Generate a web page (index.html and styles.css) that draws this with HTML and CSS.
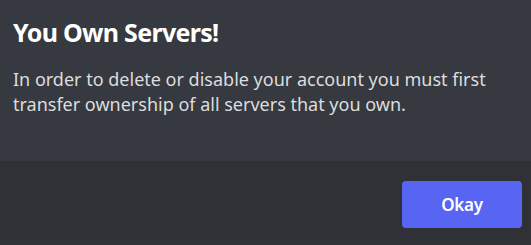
FILE: index.html
```html
<!DOCTYPE html>
<html>
<head>
<meta charset="utf-8">
<link rel="stylesheet" href="styles.css">
</head>
<body>
<div class="modal">
  <div class="content">
    <h2 class="title">You Own Servers!</h2>
    <p class="text">In order to delete or disable your account you must first transfer ownership of all servers that you own.</p>
  </div>
  <div class="footer">
    <button class="btn">Okay</button>
  </div>
</div>
</body>
</html>
```
FILE: styles.css
```css
html, body {
  margin: 0;
  padding: 0;
  width: 531px;
  height: 245px;
  overflow: hidden;
  background: #2f3136;
}
.modal {
  display: flex;
  flex-direction: column;
  height: 245px;
  font-family: "Noto Sans", "Open Sans", sans-serif;
}
.content {
  background: #36393f;
  height: 161px;
  box-sizing: border-box;
  padding: 16px 13px 0 13px;
}
.title {
  margin: 0;
  color: #ffffff;
  font-size: 25px;
  line-height: 32px;
  font-weight: 700;
  letter-spacing: -0.7px;
}
.text {
  margin: 19px 0 0 0;
  color: #dcddde;
  font-size: 18px;
  line-height: 25px;
}
.footer {
  flex: 1;
  background: #2f3136;
  display: flex;
  justify-content: flex-end;
  align-items: flex-start;
  padding: 20px 9px 0 0;
}
.btn {
  width: 120px;
  height: 47px;
  border: none;
  border-radius: 4px;
  background: #5865f2;
  color: #ffffff;
  font-family: "Noto Sans", "Open Sans", sans-serif;
  font-size: 17px;
  font-weight: 600;
  letter-spacing: -0.3px;
}
```
